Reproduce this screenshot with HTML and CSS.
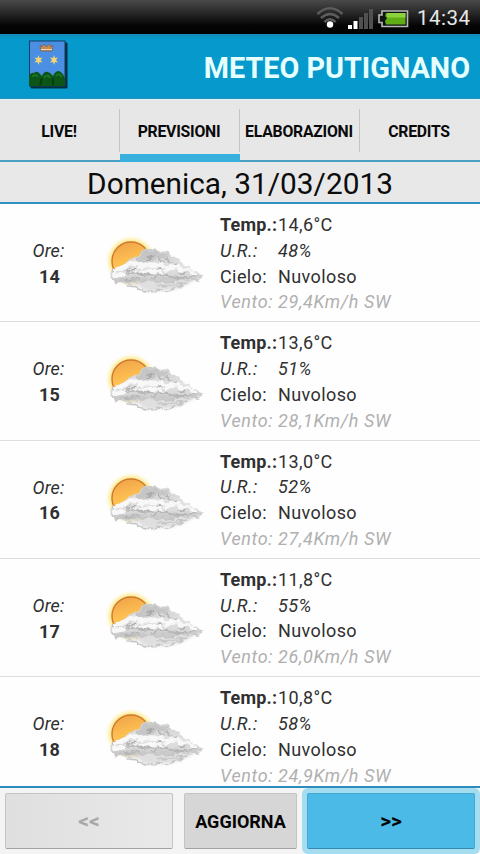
FILE: index.html
```html
<!DOCTYPE html>
<html lang="it">
<head>
    <meta charset="UTF-8">
    <meta name="viewport" content="width=device-width, initial-scale=1.0">
    <title>Meteo Putignano</title>
    <link rel="stylesheet" href="styles.css">
</head>
<body>
    <!-- shared weather icon -->
    <svg class="defs" width="0" height="0">
        <defs>
            <radialGradient id="glow">
                <stop offset="0.68" stop-color="#ffd24e"/>
                <stop offset="0.8" stop-color="#ffe98e" stop-opacity="0.8"/>
                <stop offset="1" stop-color="#fff8d8" stop-opacity="0"/>
            </radialGradient>
            <linearGradient id="sun" x1="0" y1="0" x2="0.3" y2="1">
                <stop offset="0" stop-color="#ee9f48"/>
                <stop offset="0.6" stop-color="#ffc252"/>
            </linearGradient>
            <linearGradient id="cloud" x1="0" y1="0" x2="0" y2="1">
                <stop offset="0" stop-color="#c9c9c9"/>
                <stop offset="0.5" stop-color="#e2e2e2"/>
                <stop offset="0.75" stop-color="#dadada"/>
                <stop offset="1" stop-color="#c2c2c2"/>
            </linearGradient>
            <filter id="soft2" x="-20%" y="-40%" width="140%" height="180%"><feGaussianBlur stdDeviation="1.7"/></filter>
            <filter id="fluff" x="-10%" y="-10%" width="120%" height="120%">
                <feTurbulence type="fractalNoise" baseFrequency="0.13 0.18" numOctaves="3" seed="4"/>
                <feDisplacementMap in="SourceGraphic" scale="8" xChannelSelector="R" yChannelSelector="G"/>
                <feGaussianBlur stdDeviation="0.65"/>
            </filter>
        </defs>
        <symbol id="nuvoloso" viewBox="0 0 115 80">
            <circle cx="36" cy="36" r="26" fill="url(#glow)"/>
            <circle cx="36" cy="36" r="19" fill="url(#sun)" stroke="#cc7a30" stroke-width="1.4"/>
            <path d="M22 56Q34 59 44 61Q50 69 64 66Q83 66 98 56Q103 53 98 50L40 50Z" fill="#cbcbcb" opacity="0.6" filter="url(#soft2)"/>
            <g filter="url(#fluff)">
                <path d="M16 53C14 47 18 42 25 40C31 37 38 34 43 30C49 25 56 22 62 24C69 26 75 30 79 34C86 34 91 39 97 44C105 47 110 50 106 54C94 57 85 54 78 57C66 58 61 54 52 57C43 59 37 56 29 57C22 57 17 57 16 53Z" fill="url(#cloud)"/>
                <path d="M42 33Q51 25 61 26Q70 28 76 35Q66 31 58 34Q49 36 42 39Z" fill="#bfbfbf" opacity="0.7"/>
                <g fill="none" stroke-linecap="round">
                    <path d="M20 46Q25 41 32 42Q38 37 46 39M42 44Q50 38 60 40Q66 39 71 42M72 45Q79 40 87 44Q93 44 100 50M20 51L30 49M47 48Q58 44 67 48" stroke="#f8f8f8" stroke-width="4.500"/>
                    <path d="M30 48Q36 45 43 49Q51 51 57 48M57 53Q67 49 76 52Q86 54 100 52M30 55L43 54" stroke="#b6b6b6" stroke-width="2"/>
                    <path d="M32 61Q41 61 45 64Q54 68 67 66Q76 66 87 60M20 57L37 59M62 61Q76 61 92 58" stroke="#c6c6c6" stroke-width="1.600"/>
                    <path d="M52 34L58 31M64 33L68 36M78 40L80 38M38 45L42 43M62 45L67 44M19 47L19 44M85 48L89 49M72 33L76 37" stroke="#a9a9a9" stroke-width="1.400"/>
                </g>
            </g>
        </symbol>
    </svg>

    <div class="statusbar">
        <svg class="wifi" width="28" height="23" viewBox="0 0 28 23" fill="none" stroke="#5c5c5c" stroke-width="2.5">
            <path d="M1.5 8Q14 -3.5 26.5 8"/>
            <path d="M5 12Q14 4 23 12"/>
            <path d="M8.5 16Q14 10.5 19.500 16"/>
            <circle cx="14" cy="18.500" r="3.200" fill="#fff" stroke="none"/>
        </svg>
        <svg class="signal" width="26" height="21" viewBox="0 0 26 21">
            <path d="M0 16h4v4H0zM5.500 12h4v8h-4z" fill="#fff"/>
            <path d="M11 8h4v12h-4zM16 4h4v16h-4zM21 0h4v20h-4z" fill="#505050"/>
        </svg>
        <svg class="battery" width="31" height="18" viewBox="0 0 31 18">
            <path d="M4 1H29.500V16.500H4V12.500H1V5H4Z" fill="#111" stroke="#b9b9b9" stroke-width="1.600"/>
            <path d="M8 3H27.500V14.500H8L7 11L9 8L7 6Z" fill="#5fae16"/>
            <path d="M9 3H27.500V7.500H9Z" fill="#8ed13f"/>
        </svg>
        <span class="clock">14:34</span>
    </div>

    <header class="header">
        <svg class="crest" width="40" height="50" viewBox="0 0 40 50">
            <rect x="2.500" y="2.500" width="37" height="46" rx="1" fill="#06303f"/>
            <rect x="1.500" y="1" width="35.500" height="45" fill="#4a8fe4" stroke="#173a63"/>
            <path d="M12 5L14 7L16 4L18.500 7L21 4L23 7L25 5L24 11H13Z" fill="#c78b53" stroke="#79583f" stroke-width="0.600"/>
            <path d="M13 9.500H24" stroke="#efd7b8"/>
            <path id="star" d="M10.500 15L11.500 18L14.500 17.500L12.500 20L14.500 22.500L11.500 22L10.500 25L9.500 22L6.500 22.500L8.500 20L6.500 17.500L9.500 18Z" fill="#f2d571"/>
            <use href="#star" x="15.500"/>
            <path d="M1 46V36Q3 32 6 33Q9 30 12 34L14 36Q16 31 20 32Q23 33 25 36Q27 31 31 31Q35 33 37 38V46Z" fill="#0b5516"/>
            <path d="M4 37Q7 33 10 37M16 38Q20 33 22 38M28 36Q31 32 34 37" fill="none" stroke="#1a7523" stroke-width="2"/>
            <path d="M12 45L14 38M25 45V38" stroke="#063c0f" stroke-width="2"/>
        </svg>
        <h1>METEO PUTIGNANO</h1>
    </header>

    <nav class="tabs">
        <a class="tab">LIVE!</a>
        <a class="tab active">PREVISIONI</a>
        <a class="tab">ELABORAZIONI</a>
        <a class="tab">CREDITS</a>
    </nav>

    <h2 class="date">Domenica, 31/03/2013</h2>

    <main class="list">
        <div class="row">
            <div class="hour"><i>Ore:</i><b>14</b></div>
            <svg class="icon"><use href="#nuvoloso"/></svg>
            <div class="info">
                <b>Temp.:</b><span>14,6°C</span>
                <i>U.R.:</i><i>48%</i>
                <span>Cielo:</span><span>Nuvoloso</span>
                <i class="wind">Vento:</i><i class="wind">29,4Km/h SW</i>
            </div>
        </div>
        <div class="row">
            <div class="hour"><i>Ore:</i><b>15</b></div>
            <svg class="icon"><use href="#nuvoloso"/></svg>
            <div class="info">
                <b>Temp.:</b><span>13,6°C</span>
                <i>U.R.:</i><i>51%</i>
                <span>Cielo:</span><span>Nuvoloso</span>
                <i class="wind">Vento:</i><i class="wind">28,1Km/h SW</i>
            </div>
        </div>
        <div class="row">
            <div class="hour"><i>Ore:</i><b>16</b></div>
            <svg class="icon"><use href="#nuvoloso"/></svg>
            <div class="info">
                <b>Temp.:</b><span>13,0°C</span>
                <i>U.R.:</i><i>52%</i>
                <span>Cielo:</span><span>Nuvoloso</span>
                <i class="wind">Vento:</i><i class="wind">27,4Km/h SW</i>
            </div>
        </div>
        <div class="row">
            <div class="hour"><i>Ore:</i><b>17</b></div>
            <svg class="icon"><use href="#nuvoloso"/></svg>
            <div class="info">
                <b>Temp.:</b><span>11,8°C</span>
                <i>U.R.:</i><i>55%</i>
                <span>Cielo:</span><span>Nuvoloso</span>
                <i class="wind">Vento:</i><i class="wind">26,0Km/h SW</i>
            </div>
        </div>
        <div class="row">
            <div class="hour"><i>Ore:</i><b>18</b></div>
            <svg class="icon"><use href="#nuvoloso"/></svg>
            <div class="info">
                <b>Temp.:</b><span>10,8°C</span>
                <i>U.R.:</i><i>58%</i>
                <span>Cielo:</span><span>Nuvoloso</span>
                <i class="wind">Vento:</i><i class="wind">24,9Km/h SW</i>
            </div>
        </div>
    </main>

    <footer class="buttons">
        <button class="btn prev" disabled>&lt;&lt;</button>
        <button class="btn refresh">AGGIORNA</button>
        <button class="btn next">&gt;&gt;</button>
    </footer>
</body>
</html>
```

FILE: styles.css
```css
* {
    box-sizing: border-box;
}
body {
    margin: 0;
    width: 480px; height: 854px;
    display: flex; flex-direction: column;
    overflow: hidden;
    font-family: Roboto, "Liberation Sans", sans-serif;
    font-size: 18px;
    color: #303030;
    background-color: #fefefe;
}
.defs {
    position: absolute;
}

.statusbar {
    flex: none; height: 34px;
    display: flex; align-items: center; justify-content: flex-end;
    padding-right: 9px;
    background: linear-gradient(#4a4a4a, #262626 40%, #050505 75%, #000);
}
.wifi { margin: 1px 4px 0 0; }
.signal { margin: 5px 4px 0 0; }
.battery { margin: 3px 8px 0 0; }
.clock {
    width: 54px;
    padding-top: 2px;
    color: #e8e8e8; font-size: 20.5px; letter-spacing: 0.5px;
    white-space: nowrap;
}

.header {
    flex: none; height: 65px;
    display: flex; align-items: center; justify-content: space-between;
    padding: 0 10px 0 28px;
    background: linear-gradient(#158bb8, #0599cc 5px);
    border-bottom: 1px solid #2a8fb4;
}
.crest { margin-bottom: 3px; }
.header h1 {
    margin: 3px 0 0;
    color: #e6ffff; font-size: 28.8px; font-weight: 700;
    white-space: nowrap;
}

.tabs {
    flex: none; height: 63px;
    display: flex;
    padding-top: 1px;
    background-color: #e7e7e8;
    border-top: 1px solid #d8f4f8;
}
.tab {
    width: 120px;
    display: flex; align-items: center; justify-content: center;
    padding: 2px 2px 0 0;
    border-bottom: 2px solid #4a9fc4;
    color: #0a0a0a; font-size: 15.8px; font-weight: 700; letter-spacing: -0.25px;
    background: linear-gradient(#c4c4c4, #c4c4c4) right 0 top 8px / 1px 43px no-repeat;
}
.tab:last-child { background: none; }
.tab.active {
    padding-top: 7px;
    border-bottom: 8px solid #38b0dd;
}

.date {
    flex: none; height: 42px;
    margin: 0;
    border-bottom: 2px solid #338fbe;
    background-color: #e8e8e8;
    color: #0c0c0c; font-size: 29.8px; font-weight: 400;
    line-height: 43px; text-align: center;
}

.list {
    flex: none; height: 582px;
    overflow: hidden;
}
.row {
    height: 118.3px;
    display: flex;
    border-bottom: 1px solid #dedede;
}
.hour {
    width: 97px;
    display: flex; flex-direction: column; align-items: center;
    padding-top: 34px;
    line-height: 25.7px;
    letter-spacing: 0.2px;
}
.hour b { padding-left: 2px; }
.icon {
    width: 115px; height: 80px;
    margin: 21px 10px 0 -2px;
}
.info {
    display: grid; grid-template-columns: 58px auto;
    align-content: start;
    padding-top: 8px;
    line-height: 25.8px; letter-spacing: 0.4px;
    white-space: nowrap;
}
.info b { letter-spacing: 0.2px; }
.wind { color: #b0b0b0; letter-spacing: 0.65px; }

.buttons {
    flex: none; height: 68px;
    display: flex; align-items: flex-start;
    border-top: 2px solid #2c8dbd;
    background-color: #f4f4f4;
    padding-left: 5px;
}
.btn {
    height: 56px;
    margin: 5px 0 0; padding: 0;
    border: 1px solid #c4c4c4; border-bottom-color: #a2a2a2; border-radius: 2px;
    background-color: #d6d6d6;
    color: #050505;
    font-family: inherit; font-size: 18px; font-weight: 700;
}
.prev {
    width: 168px;
    color: #a8a8a8; font-size: 21px;
    background: linear-gradient(90deg, #dfdfdf, #e9e9e9);
}
.refresh {
    width: 113px;
    margin-left: 11px;
}
.next {
    width: 168px;
    margin-left: 10px;
    border-color: #43a9d0; border-bottom-color: #338caf;
    background-color: #4bbae6;
    box-shadow: 0 0 0 5px #a4dcf0;
    font-size: 21px;
}
```
